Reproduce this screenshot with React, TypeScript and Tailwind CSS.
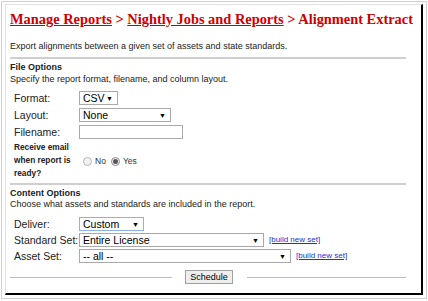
import React from "react";

const Sel = ({ w, text, focus }: { w: string; text: string; focus?: boolean }) => (
  <div
    className={`${w} h-[14px] bg-white border ${focus ? "border-[#8ab4e0]" : "border-[#a9a9a9]"} flex items-center justify-between pl-[3px] pr-[4px] text-[10.5px] leading-none text-black`}
  >
    <span>{text}</span>
    <span className="text-[7px] leading-none">▼</span>
  </div>
);

const Label = ({ children }: { children: React.ReactNode }) => (
  <div className="w-[65px] shrink-0 whitespace-nowrap text-[10.5px] leading-none text-[#222]">{children}</div>
);

const Link = () => (
  <span className="text-[8px] leading-none text-[#2233cc] underline ml-[5px]">[build new set]</span>
);

export default function App() {
  return (
    <div className="w-[428px] h-[301px] bg-white pt-[1px] pl-[1px]" style={{ fontFamily: '"Liberation Sans", Arial, sans-serif' }}>
      <div className="w-[426px] h-[298px] border border-[#d0d0d0] pt-[2px] pl-[3px]">
        <div className="w-[418px] h-[291px] border-l border-t border-[#e2e2e2] border-r-2 border-b-2 border-r-black border-b-black pl-[4px]">
          <div
            className="mt-[6px] text-[14.4px] font-bold text-[#cc0000] leading-[16px] whitespace-nowrap"
            style={{ fontFamily: '"Liberation Serif", "Times New Roman", serif' }}
          >
            <span className="underline">Manage Reports</span> &gt; <span className="underline">Nightly Jobs and Reports</span> &gt; Alignment Extract
          </div>
          <div className="mt-[14px] text-[9px] leading-[11px] text-[#222]">
            Export alignments between a given set of assets and state standards.
          </div>
          <div className="mt-[5px] w-[396px] h-[2px] bg-[#cfcfcf]" />
          <div className="mt-[3px] text-[9px] font-bold leading-[11px] text-[#222]">File Options</div>
          <div className="mt-[1px] text-[9px] leading-[11px] text-[#222]">
            Specify the report format, filename, and column layout.
          </div>
          <div className="pl-[4px] mt-[6px] flex flex-col gap-[3px]">
            <div className="flex items-center h-[14px]">
              <Label>Format:</Label>
              <Sel w="w-[39px]" text="CSV" />
            </div>
            <div className="flex items-center h-[14px]">
              <Label>Layout:</Label>
              <Sel w="w-[92px]" text="None" />
            </div>
            <div className="flex items-center h-[14px]">
              <Label>Filename:</Label>
              <div className="w-[104px] h-[14px] border border-[#a9a9a9] bg-white" />
            </div>
            <div className="flex items-center -mt-[1px]">
              <div className="w-[65px] text-[8.3px] font-bold leading-[13px] text-[#222]">
                Receive email
                <br />
                when report is
                <br />
                ready?
              </div>
              <div className="flex items-center text-[8.5px] text-[#333] ml-[4px] mt-[1px]">
                <span className="w-[9px] h-[9px] rounded-full border border-[#b5b5b5] bg-[#f2f2f2]" />
                <span className="ml-[3px]">No</span>
                <span className="ml-[5px] w-[9px] h-[9px] rounded-full border border-[#8a8a8a] bg-[#f2f2f2] flex items-center justify-center">
                  <span className="w-[5px] h-[5px] rounded-full bg-[#555]" />
                </span>
                <span className="ml-[3px]">Yes</span>
              </div>
            </div>
          </div>
          <div className="mt-[3px] w-[396px] h-[2px] bg-[#cfcfcf]" />
          <div className="mt-[3px] text-[9px] font-bold leading-[11px] text-[#222]">Content Options</div>
          <div className="mt-[0px] text-[9px] leading-[11px] text-[#222]">
            Choose what assets and standards are included in the report.
          </div>
          <div className="pl-[4px] mt-[7px] flex flex-col gap-[2px]">
            <div className="flex items-center h-[14px]">
              <Label>Deliver:</Label>
              <Sel w="w-[65px]" text="Custom" focus />
            </div>
            <div className="flex items-center h-[14px]">
              <Label>Standard Set:</Label>
              <Sel w="w-[185px]" text="Entire License" />
              <Link />
            </div>
            <div className="flex items-center h-[14px]">
              <Label>Asset Set:</Label>
              <Sel w="w-[212px]" text="-- all --" />
              <Link />
            </div>
          </div>
          <div className="mt-[7px] w-[396px] flex items-center">
            <div className="w-[162px] h-px bg-[#bdbdbd]" />
            <div className="ml-[13px] w-[48px] h-[14px] border border-[#a0a0a0] bg-[#eeeeee] flex items-center justify-center text-[9px] leading-none text-black">
              Schedule
            </div>
            <div className="ml-[14px] flex-1 h-px bg-[#bdbdbd]" />
          </div>
        </div>
      </div>
    </div>
  );
}
